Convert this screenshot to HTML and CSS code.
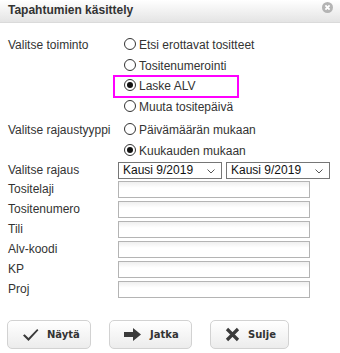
FILE: index.html
```html
<!DOCTYPE html>
<html>
<head>
<meta charset="utf-8">
<link rel="stylesheet" href="styles.css">
</head>
<body>
<div class="dialog">
  <div class="titlebar">
    <span class="title">Tapahtumien käsittely</span>
    <span class="close"><svg width="11" height="11" viewBox="0 0 11 11"><circle cx="5.5" cy="5.5" r="5.5" fill="#b4b4b4"/><path d="M3.4 3.4 L7.6 7.6 M7.6 3.4 L3.4 7.6" stroke="#fff" stroke-width="1.8"/></svg></span>
  </div>
  <div class="content">
    <div class="group g1">
      <div class="label">Valitse toiminto</div>
      <div class="options">
        <div class="opt"><span class="radio"></span>Etsi erottavat tositteet</div>
        <div class="opt"><span class="radio"></span>Tositenumerointi</div>
        <div class="opt hl"><span class="radio on"></span>Laske ALV</div>
        <div class="opt"><span class="radio"></span>Muuta tositepäivä</div>
      </div>
    </div>
    <div class="group g2">
      <div class="label">Valitse rajaustyyppi</div>
      <div class="options">
        <div class="opt"><span class="radio"></span>Päivämäärän mukaan</div>
        <div class="opt"><span class="radio on"></span>Kuukauden mukaan</div>
      </div>
    </div>
    <div class="row sel-row">
      <div class="label">Valitse rajaus</div>
      <div class="selects">
        <div class="select"><span>Kausi 9/2019</span><svg width="8" height="5" viewBox="0 0 8 5"><path d="M0.5 0.5 L4 4 L7.5 0.5" fill="none" stroke="#555" stroke-width="1"/></svg></div>
        <div class="select"><span>Kausi 9/2019</span><svg width="8" height="5" viewBox="0 0 8 5"><path d="M0.5 0.5 L4 4 L7.5 0.5" fill="none" stroke="#555" stroke-width="1"/></svg></div>
      </div>
    </div>
    <div class="row"><div class="label">Tositelaji</div><div class="input"></div></div>
    <div class="row"><div class="label">Tositenumero</div><div class="input"></div></div>
    <div class="row"><div class="label">Tili</div><div class="input"></div></div>
    <div class="row"><div class="label">Alv-koodi</div><div class="input"></div></div>
    <div class="row"><div class="label">KP</div><div class="input"></div></div>
    <div class="row"><div class="label">Proj</div><div class="input"></div></div>
  </div>
  <div class="buttons">
    <div class="btn"><svg width="17" height="14" viewBox="0 0 17 14"><path d="M1 7.5 L2.6 6.2 L6.5 10 L15.2 1 L16.4 2.2 L6.5 13 Z" fill="#3a3a3a"/></svg><span>Näytä</span></div>
    <div class="btn"><svg width="18" height="13" viewBox="0 0 18 13"><path d="M0 4 H9 V0 L17 6.5 L9 13 V9 H0 Z" fill="#3a3a3a"/></svg><span>Jatka</span></div>
    <div class="btn"><svg width="15" height="15" viewBox="0 0 15 15"><path d="M2 2 L13 13 M13 2 L2 13" stroke="#3a3a3a" stroke-width="3.2"/></svg><span>Sulje</span></div>
  </div>
</div>
</body>
</html>
```

FILE: styles.css
```css
html, body {
  margin: 0;
  padding: 0;
  background: #fff;
}
body {
  font-family: "Liberation Sans", Arial, sans-serif;
  font-size: 12px;
  color: #333;
}
.dialog {
  width: 340px;
  height: 353px;
  display: flex;
  flex-direction: column;
}
.titlebar {
  height: 23px;
  box-sizing: border-box;
  border-bottom: 1px solid #dadada;
  background: linear-gradient(#ffffff, #e4e4e4);
  display: flex;
  align-items: center;
  justify-content: space-between;
  padding: 0 7px 2px 8px;
}
.title {
  font-weight: bold;
  font-size: 12px;
  color: #333;
}
.close {
  display: flex;
  margin-top: -6px;
}
.content {
  padding: 12px 0 0 8px;
}
.group {
  display: flex;
}
.label {
  width: 110px;
  flex: none;
  line-height: 20px;
  font-size: 12px;
}
.opt {
  height: 20.5px;
  display: flex;
  align-items: center;
  position: relative;
  font-size: 12px;
}
.radio {
  width: 10px;
  height: 10px;
  border: 1px solid #333;
  border-radius: 50%;
  margin: 0 3px 0 6px;
  display: inline-flex;
  align-items: center;
  justify-content: center;
  box-sizing: content-box;
  position: relative;
  top: -1px;
}
.radio.on::after {
  content: "";
  width: 6px;
  height: 6px;
  border-radius: 50%;
  background: #111;
}
.hl::before {
  content: "";
  position: absolute;
  left: -5px;
  top: -1px;
  width: 122px;
  height: 19px;
  border: 2px solid #ff00ff;
}
.g2 {
  margin-top: 3px;
}
.row {
  display: flex;
  align-items: center;
  height: 20px;
}
.sel-row {
  height: 18px;
}
.selects {
  display: flex;
  gap: 4px;
}
.select {
  width: 104px;
  height: 17px;
  box-sizing: border-box;
  border: 1px solid #767676;
  display: flex;
  align-items: center;
  justify-content: space-between;
  padding: 0 6px 0 4px;
  font-size: 12px;
  color: #111;
  background: #fff;
}
.select svg {
  margin-top: 3px;
}
.input {
  width: 192px;
  height: 17px;
  box-sizing: border-box;
  border: 1px solid #b4b4b4;
  background: linear-gradient(#efefef, #ffffff 6px);
}
.buttons {
  display: flex;
  gap: 18px;
  padding: 0 0 0 7px;
  margin-top: 21px;
}
.btn {
  height: 29px;
  box-sizing: border-box;
  border: 1px solid #d2d2d2;
  border-radius: 5px;
  background: linear-gradient(#ffffff, #ececec);
  display: flex;
  align-items: center;
  font-family: "DejaVu Sans", Verdana, sans-serif;
  font-weight: bold;
  font-size: 10px;
  color: #333;
}
.btn:nth-child(1) { width: 84px; padding-left: 14px; }
.btn:nth-child(2) { width: 83px; padding-left: 14px; }
.btn:nth-child(3) { width: 79px; padding-left: 14px; }
.btn svg { margin-right: 8px; }
```
